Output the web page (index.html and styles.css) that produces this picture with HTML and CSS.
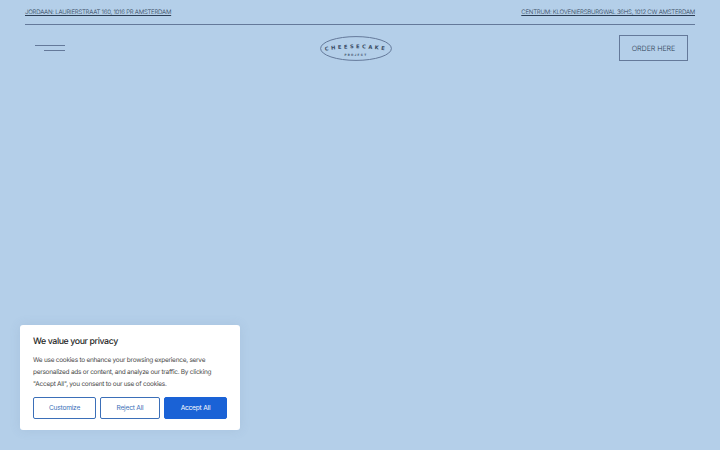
FILE: index.html
```html
<!DOCTYPE html>
<html lang="en">
<head>
  <meta charset="UTF-8" />
  <meta name="viewport" content="width=device-width, initial-scale=1.0" />
  <title>Cheesecake Project</title>
  <link rel="stylesheet" href="styles.css">
</head>
<body>
  <header class="site-header">
    <div class="topbar">
      <a href="#" class="address">JORDAAN: LAURIERSTRAAT 160, 1016 PR AMSTERDAM</a>
      <a href="#" class="address">CENTRUM: KLOVENIERSBURGWAL 36HS, 1012 CW AMSTERDAM</a>
    </div>
    <nav class="mainbar">
      <button class="menu-toggle" aria-label="Menu">
        <span class="line-long"></span>
        <span class="line-short"></span>
      </button>
      <a href="#" class="logo">
        <svg width="72" height="25" viewBox="0 0 72 25">
          <ellipse cx="36" cy="12.5" rx="35.4" ry="11.9" />
          <path id="logo-arc" d="M3 15 Q36 9.6 69 15" fill="none" />
          <text class="logo-main"><textPath href="#logo-arc" startOffset="50%">CHEESECAKE</textPath></text>
          <text x="36" y="19.6" class="logo-sub">PROJECT</text>
        </svg>
      </a>
      <a href="#" class="order">ORDER HERE</a>
    </nav>
  </header>

  <section class="cookie">
    <h2>We value your privacy</h2>
    <p>We use cookies to enhance your browsing experience, serve personalized ads or content, and analyze our traffic. By clicking "Accept All", you consent to our use of cookies.</p>
    <div class="cookie-buttons">
      <button class="btn btn-customize">Customize</button>
      <button class="btn btn-reject">Reject All</button>
      <button class="btn btn-accept">Accept All</button>
    </div>
  </section>
</body>
</html>
```

FILE: styles.css
```css
html, body {
  height: 100%;
}
body {
  margin: 0;
  background-color: #b4cfe9;
  color: #2c3e55;
  font-family: 'Inter', sans-serif;
  text-rendering: geometricPrecision;
  display: flex;
  flex-direction: column;
  justify-content: space-between;
  padding: 0 25px 20px 20px;
  box-sizing: border-box;
  overflow: hidden;
}
.site-header {
  margin-left: 5px;
}
.topbar {
  display: flex;
  justify-content: space-between;
  align-items: center;
  height: 25px;
  padding-top: 1px;
  box-sizing: border-box;
  border-bottom: 1px solid #64799a;
}
.address {
  color: #2c3e55;
  font-size: 6.1px;
  font-weight: 300;
  letter-spacing: -0.25px;
  text-decoration: underline;
}
.mainbar {
  display: flex;
  justify-content: space-between;
  align-items: center;
  padding: 10px 7px 0 10px;
}
.menu-toggle {
  display: flex;
  flex-direction: column;
  align-items: flex-end;
  gap: 4px;
  width: 30px;
  padding: 0;
  border: none;
  background: none;
}
.menu-toggle span {
  display: block;
  height: 1px;
  background-color: #64799a;
}
.line-long {
  width: 30px;
}
.line-short {
  width: 21px;
}
.logo {
  display: block;
  height: 25px;
  margin-left: 28px;
}
.logo ellipse {
  fill: none;
  stroke: #64799a;
  stroke-width: 1;
}
.logo text {
  fill: #3a4d66;
  text-anchor: middle;
}
.logo-main {
  font-family: 'DejaVu Sans', sans-serif;
  font-size: 5.2px;
  font-weight: 700;
  letter-spacing: 2.4px;
}
.logo-sub {
  font-family: 'Inter', sans-serif;
  font-size: 3px;
  font-weight: 700;
  letter-spacing: 1.3px;
}
.order {
  display: flex;
  align-items: center;
  justify-content: center;
  width: 69px;
  height: 26px;
  box-sizing: border-box;
  border: 1px solid #64799a;
  color: #2c3e55;
  font-size: 7.2px;
  font-weight: 300;
  letter-spacing: -0.1px;
  text-decoration: none;
}
.cookie {
  width: 220px;
  height: 105px;
  box-sizing: border-box;
  padding: 11px 13px;
  background-color: #fff;
  border-radius: 3px;
  box-shadow: 0 0 12px rgba(80, 110, 150, 0.12);
}
.cookie h2 {
  margin: 0;
  color: #1f1f1f;
  font-size: 8.8px;
  font-weight: 500;
  letter-spacing: -0.4px;
  line-height: 12px;
}
.cookie p {
  margin: 6px 0 7px;
  color: #4a4a4a;
  font-size: 6.5px;
  letter-spacing: -0.26px;
  line-height: 12px;
}
.cookie-buttons {
  display: flex;
  gap: 4px;
}
.btn {
  height: 22px;
  padding: 0;
  border: 1.5px solid #3b6fb8;
  border-radius: 2px;
  background-color: #fff;
  color: #3b6fb8;
  font-family: 'Inter', sans-serif;
  font-size: 6.6px;
  letter-spacing: -0.2px;
}
.btn-customize {
  width: 63px;
}
.btn-reject {
  width: 60px;
}
.btn-accept {
  width: 63px;
  background-color: #1a62d6;
  border-color: #1a62d6;
  color: #fff;
}
```
